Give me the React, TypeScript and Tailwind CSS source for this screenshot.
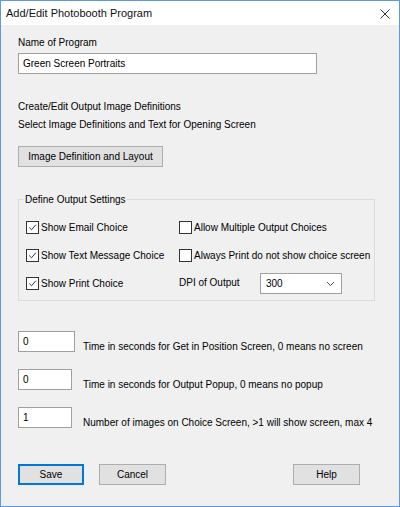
import React from "react";

const font = { fontFamily: '"Liberation Sans", Arial, sans-serif' };

function Check({ checked, label }: { checked?: boolean; label: string }) {
  return (
    <div className="flex items-center h-[13px]">
      <div className="w-[13px] h-[13px] border border-[#333] bg-white flex items-center justify-center shrink-0">
        {checked && (
          <svg width="11" height="11" viewBox="0 0 11 11">
            <path d="M2.2 5.5 L4.5 7.8 L8.8 2.8" fill="none" stroke="#333" strokeWidth="1" />
          </svg>
        )}
      </div>
      <span className="ml-[2px] text-[10px] leading-[13px] text-black whitespace-nowrap">{label}</span>
    </div>
  );
}

function Btn({ label, w, primary }: { label: string; w: string; primary?: boolean }) {
  return (
    <div
      className={`${w} h-[21px] flex items-center justify-center text-[10px] text-black bg-[#e1e1e1] ${
        primary ? "border-2 border-[#0078d7]" : "border border-[#adadad]"
      }`}
    >
      {label}
    </div>
  );
}

export default function App() {
  return (
    <div
      className="w-[400px] h-[507px] border border-[#5a9be0] bg-[#f0f0f0] flex flex-col overflow-hidden"
      style={font}
    >
      <div className="h-[24px] bg-white flex items-center justify-between pl-[5px] pr-[9px] shrink-0">
        <span className="text-[11px] text-[#111] mt-[1px]">Add/Edit Photobooth Program</span>
        <svg width="10" height="10" viewBox="0 0 10 10" className="mt-[1px]">
          <path d="M0.5 0.5 L9.5 9.5 M9.5 0.5 L0.5 9.5" stroke="#333" strokeWidth="1" />
        </svg>
      </div>
      <div className="flex flex-col pl-[17px] pr-[25px] text-[10px] leading-[13px] text-black">
        <div className="mt-[11px]">Name of Program</div>
        <div className="mt-[4px] w-[299px] h-[21px] border border-[#a0a0a0] bg-white flex items-center pl-[4px]">
          Green Screen Portraits
        </div>
        <div className="mt-[26px]">Create/Edit Output Image Definitions</div>
        <div className="mt-[5px]">Select Image Definitions and Text for Opening Screen</div>
        <div className="mt-[15px]">
          <Btn label="Image Definition and Layout" w="w-[145px]" />
        </div>
        <div className="mt-[32px] relative w-[357px] h-[102px] border border-[#dcdcdc]">
          <div className="absolute left-[5px] -top-[7px] bg-[#f0f0f0] px-[1px]">Define Output Settings</div>
          <div className="grid grid-cols-[153px_1fr] gap-y-[15px] pl-[7px] pt-[21px]">
            <Check checked label="Show Email Choice" />
            <Check label="Allow Multiple Output Choices" />
            <Check checked label="Show Text Message Choice" />
            <Check label="Always Print do not show choice screen" />
            <Check checked label="Show Print Choice" />
            <div className="flex items-center h-[13px]">
              <span className="w-[81px] -mt-[3px]">DPI of Output</span>
              <div className="w-[82px] h-[21px] shrink-0 border border-[#a0a0a0] bg-white flex items-center justify-between pl-[5px] pr-[6px]">
                <span>300</span>
                <svg width="9" height="6" viewBox="0 0 9 6">
                  <path d="M1 1 L4.5 4.5 L8 1" fill="none" stroke="#555" strokeWidth="1" />
                </svg>
              </div>
            </div>
          </div>
        </div>
        <div className="mt-[30px] flex flex-col gap-[16px]">
          {[
            ["0", "w-[57px]", "ml-[8px]", "Time in seconds for Get in Position Screen, 0 means no screen"],
            ["0", "w-[54px]", "ml-[11px]", "Time in seconds for Output Popup, 0 means no popup"],
            ["1", "w-[54px]", "ml-[11px]", "Number of images on Choice Screen, >1 will show screen, max 4"],
          ].map(([v, w, ml, t], i) => (
            <div key={i} className="flex items-start">
              <div className={`${w} h-[21px] border border-[#a0a0a0] bg-white pl-[4px] pt-[3px] shrink-0`}>{v}</div>
              <span className={`mt-[9px] ${ml} whitespace-nowrap`}>{t}</span>
            </div>
          ))}
        </div>
        <div className="mt-[35px] flex items-center">
          <Btn label="Save" w="w-[66px]" primary />
          <div className="ml-[15px]">
            <Btn label="Cancel" w="w-[67px]" />
          </div>
          <div className="ml-[127px]">
            <Btn label="Help" w="w-[67px]" />
          </div>
        </div>
      </div>
    </div>
  );
}
